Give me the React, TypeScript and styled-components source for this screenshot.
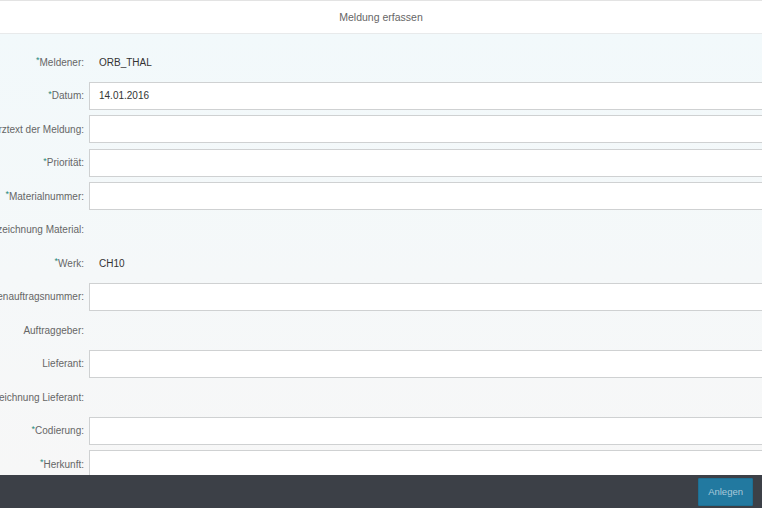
import { Fragment } from 'react';
import styled, { createGlobalStyle } from 'styled-components';

const GlobalStyle = createGlobalStyle`
  html, body {
    margin: 0;
    padding: 0;
    overflow: hidden;
  }
  body {
    font-family: 'Liberation Sans', Arial, sans-serif;
  }
`;

/* =========================
   LAYOUT
========================= */
const Page = styled.div`
  height: 100vh;
  display: flex;
  flex-direction: column;
`;

const Header = styled.header`
  flex: 0 0 auto;
  height: 32px;
  display: flex;
  align-items: center;
  justify-content: center;
  background: #ffffff;
  border-top: 1px solid #e3e3e3;
  border-bottom: 1px solid #e8eaeb;
`;

const Title = styled.h1`
  margin: 0;
  font-size: 10.5px;
  font-weight: 400;
  color: #666666;
`;

const Content = styled.main`
  flex: 1;
  min-height: 0;
  overflow: hidden;
  padding-top: 14px;
  background: linear-gradient(180deg, #f2f9fb 0%, #f5f8f9 55%, #f7f7f7 100%);
`;

const Form = styled.div`
  display: grid;
  grid-template-columns: 84px 720px;
  grid-auto-rows: 28px;
  column-gap: 5px;
  row-gap: 5.5px;
`;

const Label = styled.label`
  display: flex;
  align-items: center;
  justify-content: flex-end;
  white-space: nowrap;
  font-size: 10px;
  color: #666666;
`;

const Required = styled.span`
  color: #1f8a80;
  font-size: 9px;
  line-height: 1;
  align-self: flex-start;
  margin-top: 8px;
`;

const Value = styled.div`
  display: flex;
  align-items: center;
  padding-left: 10px;
  font-size: 10px;
  color: #333333;
`;

const Input = styled.input`
  box-sizing: border-box;
  height: 28px;
  width: 100%;
  margin: 0;
  padding: 0 9px;
  font-family: inherit;
  font-size: 10px;
  color: #333333;
  background: #ffffff;
  border: 1px solid #cfd1d2;
  border-radius: 0;
  outline: none;
`;

const Footer = styled.footer`
  flex: 0 0 auto;
  height: 33px;
  display: flex;
  align-items: center;
  justify-content: flex-end;
  padding-right: 9px;
  background: #3c4047;
`;

const Button = styled.button`
  height: 28px;
  padding: 0 9px;
  border: 1px solid #1d6f93;
  background: #2279a0;
  color: #a9c9da;
  font-family: inherit;
  font-size: 9.5px;
  border-radius: 1px;
  cursor: pointer;
`;

type Field = {
  label: string;
  required?: boolean;
  value?: string;
  input?: boolean;
};

const fields: Field[] = [
  { label: 'Meldener', required: true, value: 'ORB_THAL' },
  { label: 'Datum', required: true, value: '14.01.2016', input: true },
  { label: 'Kurztext der Meldung', input: true },
  { label: 'Priorität', required: true, input: true },
  { label: 'Materialnummer', required: true, input: true },
  { label: 'Bezeichnung Material', value: '' },
  { label: 'Werk', required: true, value: 'CH10' },
  { label: 'Kundenauftragsnummer', input: true },
  { label: 'Auftraggeber', value: '' },
  { label: 'Lieferant', input: true },
  { label: 'Bezeichnung Lieferant', value: '' },
  { label: 'Codierung', required: true, input: true },
  { label: 'Herkunft', required: true, input: true },
];

export default function App() {
  return (
    <>
      <GlobalStyle />
      <Page>
        <Header>
          <Title>Meldung erfassen</Title>
        </Header>

        <Content>
          <Form>
            {fields.map((f) => (
              <Fragment key={f.label}>
                <Label>
                  {f.required && <Required>*</Required>}
                  {f.label}:
                </Label>
                {f.input ? (
                  <Input defaultValue={f.value ?? ''} />
                ) : (
                  <Value>{f.value}</Value>
                )}
              </Fragment>
            ))}
          </Form>
        </Content>

        <Footer>
          <Button>Anlegen</Button>
        </Footer>
      </Page>
    </>
  );
}
